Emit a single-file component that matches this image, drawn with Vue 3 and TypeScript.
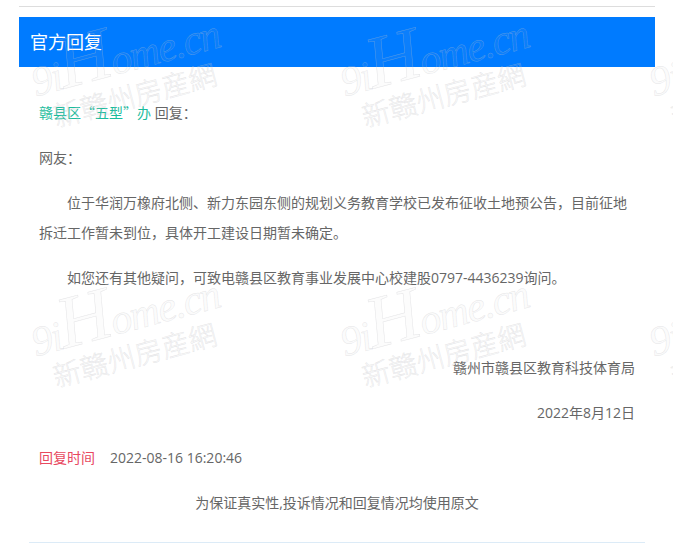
<script setup lang="ts">
const tiles: { x: number; y: number }[] = []
for (const y of [53, 313, 575]) {
  for (const x of [24, 333, 642]) tiles.push({ x, y })
}
</script>

<template>
  <div class="page">
    <hr class="rule" />
    <section class="card">
      <h2 class="title">官方回复</h2>
      <div class="body">
        <p><span class="dept">赣县区“五型”办</span> 回复&#xFF1A;</p>
        <p>网友&#xFF1A;</p>
        <p class="indent">位于华润万橡府北侧、新力东园东侧的规划义务教育学校已发布征收土地预公告&#xFF0C;目前征地拆迁工作暂未到位&#xFF0C;具体开工建设日期暂未确定。</p>
        <p class="indent">如您还有其他疑问&#xFF0C;可致电赣县区教育事业发展中心校建股0797-4436239询问。</p>
        <p class="blank">&nbsp;</p>
        <p class="right">赣州市赣县区教育科技体育局</p>
        <p class="right">2022年8月12日</p>
        <p><span class="time-label">回复时间</span><span class="time">2022-08-16 16:20:46</span></p>
        <p class="center">为保证真实性,投诉情况和回复情况均使用原文</p>
      </div>
      <div class="bottom-line"></div>
    </section>
    <div
      v-for="(t, i) in tiles"
      :key="i"
      class="mark"
      :style="{ left: t.x + 'px', top: t.y + 'px' }"
    >
      <div class="mark-en">9i<span class="mark-h">H</span>ome.cn</div>
      <div class="mark-cn">新赣州房産網</div>
    </div>
  </div>
</template>

<style scoped>
.page {
  position: relative;
  width: 673px;
  height: 546px;
  overflow: hidden;
  background: #fff;
  font-family: "Open Sans", "Noto Sans CJK SC", sans-serif;
  font-size: 14px;
  color: #666;
}
.rule {
  margin: 0 18px 0 19px;
  padding: 0;
  border: 0;
  border-top: 1px solid #ddd;
  position: relative;
  top: 6px;
}
.card {
  margin: 16px 18px 0 19px;
}
.title {
  margin: 0;
  height: 50px;
  padding-left: 11px;
  background: #007bff;
  color: #fff;
  font-size: 18px;
  font-weight: 400;
  line-height: 50px;
}
.body {
  padding: 30px 20px 0;
}
.body p {
  margin: 0 0 15px;
  line-height: 30px;
}
.dept {
  color: #1abc9c;
  font-family: "Noto Sans CJK SC", sans-serif;
}
.indent {
  text-indent: 28px;
}
.right {
  text-align: right;
}
.center {
  text-align: center;
}
.time-label {
  color: #e8495f;
  margin-right: 15px;
}
.bottom-line {
  margin: 0 10px;
  border-top: 1px solid #dcebf7;
  position: relative;
  top: 9px;
}
.mark {
  position: absolute;
  width: 190px;
  height: 80px;
  transform: rotate(-15deg);
  transform-origin: left top;
  pointer-events: none;
  white-space: nowrap;
}
.mark-en {
  font-family: "Liberation Serif", serif;
  font-style: italic;
  font-size: 42px;
  line-height: 40px;
  letter-spacing: -1.5px;
  color: rgba(200, 200, 205, 0.06);
  -webkit-text-stroke: 0.5px rgba(195, 195, 200, 0.42);
}
.mark-h {
  font-size: 74px;
  line-height: 40px;
}
.mark-cn {
  margin: 2px 0 0 12px;
  font-size: 28px;
  font-weight: 300;
  line-height: 32px;
  color: rgba(200, 200, 205, 0.08);
  -webkit-text-stroke: 0.5px rgba(195, 195, 200, 0.42);
}
</style>
